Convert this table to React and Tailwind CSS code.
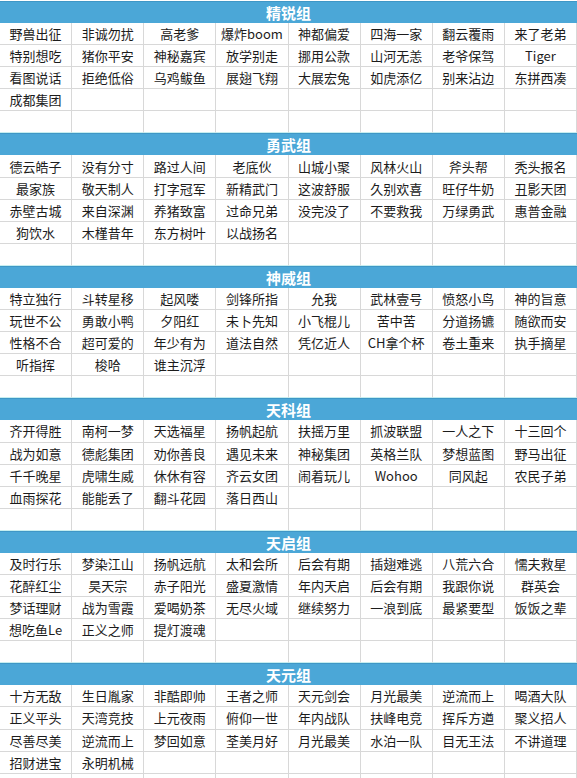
import React from "react";

const groups = [
  {
    title: "精锐组",
    rows: [
      ["野兽出征", "非诚勿扰", "高老爹", "爆炸boom", "神都偏爱", "四海一家", "翻云覆雨", "来了老弟"],
      ["特别想吃", "猪你平安", "神秘嘉宾", "放学别走", "挪用公款", "山河无恙", "老爷保驾", "Tiger"],
      ["看图说话", "拒绝低俗", "乌鸡鲅鱼", "展翅飞翔", "大展宏兔", "如虎添亿", "别来沾边", "东拼西凑"],
      ["成都集团"],
      [],
    ],
  },
  {
    title: "勇武组",
    rows: [
      ["德云皓子", "没有分寸", "路过人间", "老底伙", "山城小聚", "风林火山", "斧头帮", "秃头报名"],
      ["最家族", "敬天制人", "打字冠军", "新精武门", "这波舒服", "久别欢喜", "旺仔牛奶", "丑影天团"],
      ["赤壁古城", "来自深渊", "养猪致富", "过命兄弟", "没完没了", "不要救我", "万绿勇武", "惠普金融"],
      ["狗饮水", "木槿昔年", "东方树叶", "以战扬名"],
      [],
    ],
  },
  {
    title: "神威组",
    rows: [
      ["特立独行", "斗转星移", "起风喽", "剑锋所指", "允我", "武林壹号", "愤怒小鸟", "神的旨意"],
      ["玩世不公", "勇敢小鸭", "夕阳红", "未卜先知", "小飞棍儿", "苦中苦", "分道扬镳", "随欲而安"],
      ["性格不合", "超可爱的", "年少有为", "道法自然", "凭亿近人", "CH拿个杯", "卷土重来", "执手摘星"],
      ["听指挥", "梭哈", "谁主沉浮"],
      [],
    ],
  },
  {
    title: "天科组",
    rows: [
      ["齐开得胜", "南柯一梦", "天选福星", "扬帆起航", "扶摇万里", "抓波联盟", "一人之下", "十三回个"],
      ["战为如意", "德彪集团", "劝你善良", "遇见未来", "神秘集团", "英格兰队", "梦想蓝图", "野马出征"],
      ["千千晚星", "虎啸生威", "休休有容", "齐云女团", "闹着玩儿", "Wohoo", "同风起", "农民子弟"],
      ["血雨探花", "能能丢了", "翻斗花园", "落日西山"],
      [],
    ],
  },
  {
    title: "天启组",
    rows: [
      ["及时行乐", "梦染江山", "扬帆远航", "太和会所", "后会有期", "插翅难逃", "八荒六合", "懦夫救星"],
      ["花醉红尘", "昊天宗", "赤子阳光", "盛夏激情", "年内天启", "后会有期", "我跟你说", "群英会"],
      ["梦话理财", "战为雪霞", "爱喝奶茶", "无尽火域", "继续努力", "一浪到底", "最紧要型", "饭饭之辈"],
      ["想吃鱼Le", "正义之师", "提灯渡魂"],
      [],
    ],
  },
  {
    title: "天元组",
    rows: [
      ["十方无敌", "生日胤家", "非酷即帅", "王者之师", "天元剑会", "月光最美", "逆流而上", "喝酒大队"],
      ["正义平头", "天湾竞技", "上元夜雨", "俯仰一世", "年内战队", "扶峰电竞", "挥斥方遒", "聚义招人"],
      ["尽善尽美", "逆流而上", "梦回如意", "荃美月好", "月光最美", "水泊一队", "目无王法", "不讲道理"],
      ["招财进宝", "永明机械"],
      [],
    ],
  },
];

const Group = ({ group }) => (
  <div>
    {/* group title bar */}
    <div className="h-[22px] bg-[#4ba7d7] border-t border-[#3f97c6] flex items-center justify-center text-white font-bold text-[15px] leading-none">
      {group.title}
    </div>
    <div className="grid grid-cols-8">
      {group.rows.map((row, r) =>
        Array.from({ length: 8 }).map((_, c) => (
          <div
            key={`${r}-${c}`}
            className={`h-[22.1px] flex items-center justify-center text-[13px] leading-none text-[#1c1c1c] whitespace-nowrap border-r border-[#d8d8d8] ${
              r === group.rows.length - 1 ? "border-b border-b-[#c6eef0]" : "border-b"
            }`}
          >
            {row[c] || ""}
          </div>
        ))
      )}
    </div>
  </div>
);

const App = () => {
  return (
    <div
      className="w-[577px] h-[778px] overflow-hidden bg-white pt-px"
      style={{ fontFamily: '"Noto Sans CJK SC", "Noto Sans", sans-serif' }}
    >
      {groups.map((g) => (
        <Group key={g.title} group={g} />
      ))}
    </div>
  );
};

export default App;
